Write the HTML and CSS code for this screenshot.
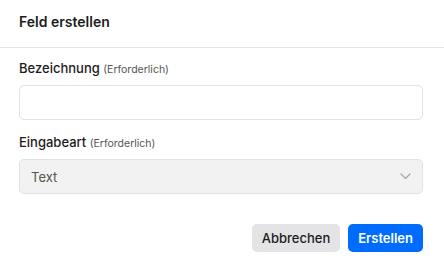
FILE: index.html
```html
<!DOCTYPE html>
<html lang="de">
<head>
    <meta charset="UTF-8">
    <meta name="viewport" content="width=device-width, initial-scale=1.0">
    <title>Feld erstellen</title>
    <link rel="stylesheet" href="styles.css">
</head>
<body>
    <div class="dialog">
        <div class="dialog-header">
            <h1>Feld erstellen</h1>
        </div>

        <div class="dialog-body">
            <div class="field">
                <label class="field-label" for="bezeichnung">Bezeichnung <span class="hint">(Erforderlich)</span></label>
                <input class="input" id="bezeichnung" type="text">
            </div>

            <div class="field">
                <label class="field-label" for="eingabeart">Eingabeart <span class="hint">(Erforderlich)</span></label>
                <div class="select">
                    <span class="select-value">Text</span>
                    <svg class="chevron" width="11" height="7" viewBox="0 0 11 7">
                        <path d="M1 1l4.5 4.5L10 1" fill="none" stroke="#a8a8a8" stroke-width="1.3" stroke-linecap="round" stroke-linejoin="round"/>
                    </svg>
                </div>
            </div>
        </div>

        <div class="dialog-footer">
            <button class="btn btn-secondary">Abbrechen</button>
            <button class="btn btn-primary">Erstellen</button>
        </div>
    </div>
</body>
</html>
```

FILE: styles.css
```css
body {
    margin: 0;
    font-family: Inter, "Noto Sans", sans-serif;
    background: #fff;
    color: #1c1c1c;
}
.dialog {
    width: 444px;
    height: 265px;
}
.dialog-header {
    padding: 11px 19px 14px;
    border-bottom: 1px solid #e4e4e4;
}
.dialog-header h1 {
    margin: 0;
    font-size: 14px;
    font-weight: 600;
    line-height: 22px;
}
.dialog-body {
    padding: 11px 21px 0 19px;
    display: flex;
    flex-direction: column;
    gap: 13px;
}
.field {
    display: flex;
    flex-direction: column;
    gap: 6px;
}
.field-label {
    font-size: 13px;
    font-weight: 500;
    line-height: 18px;
}
.hint {
    font-size: 10.5px;
    font-weight: 400;
    color: #555;
}
.input {
    box-sizing: border-box;
    height: 35px;
    margin: 0;
    border: 1px solid #e2e2e2;
    border-radius: 5px;
    background: #fff;
    font: inherit;
    outline: none;
}
.select {
    box-sizing: border-box;
    height: 35px;
    display: flex;
    align-items: center;
    justify-content: space-between;
    padding: 0 11px 0 11px;
    border: 1px solid #e2e2e2;
    border-radius: 5px;
    background: #f2f2f2;
}
.select-value {
    font-size: 13px;
    color: #555;
}
.dialog-footer {
    display: flex;
    justify-content: flex-end;
    gap: 8px;
    padding: 30px 21px 0;
}
.btn {
    height: 28px;
    padding: 0 10px;
    border: none;
    border-radius: 5px;
    font-family: inherit;
    font-size: 13px;
    font-weight: 500;
    cursor: pointer;
}
.btn-secondary {
    background: #e4e4e6;
    color: #1c1c1c;
}
.btn-primary {
    background: #006cff;
    color: #fff;
    font-weight: 600;
}
```
